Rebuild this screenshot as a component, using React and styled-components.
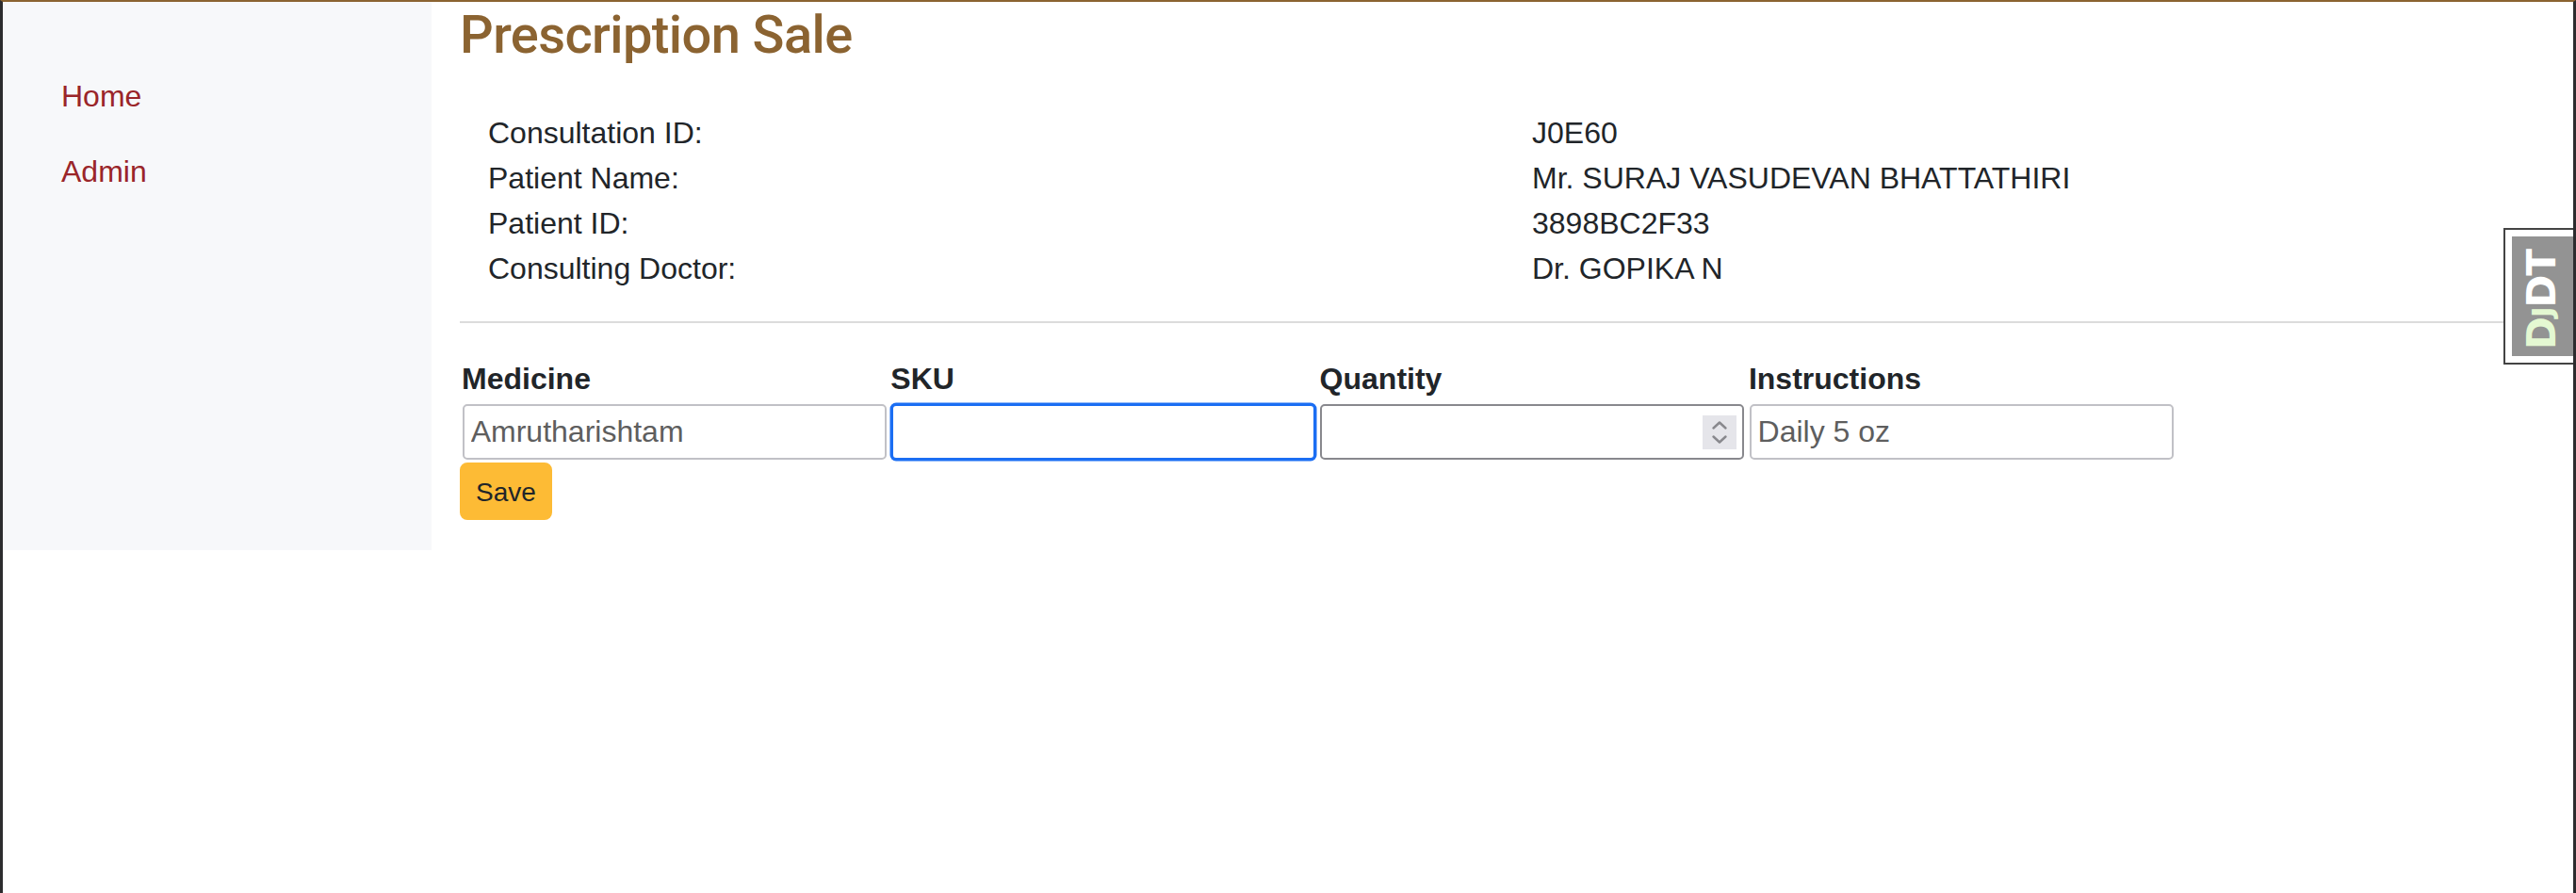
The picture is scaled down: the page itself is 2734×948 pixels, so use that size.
import React from "react";
import styled, { createGlobalStyle } from "styled-components";

const GlobalStyle = createGlobalStyle`
  *, *::before, *::after { box-sizing: border-box; }
  html, body { margin: 0; padding: 0; background: #fff; }
  body {
    font-family: "Liberation Sans", Arial, sans-serif;
    color: #212529;
    font-size: 32px;
    line-height: 1.5;
  }
`;

const Frame = styled.div`
  min-height: 100vh;
  border-top: 2px solid #8b6331;
  border-left: 3px solid #2c2c2e;
  border-right: 3px solid #2c2c2e;
`;

const Row = styled.div`
  display: flex;
  align-items: stretch;
`;

const Sidebar = styled.nav`
  flex: 0 0 455px;
  background: #f7f8fa;
  padding: 60px 0 0 30px;
`;

const NavList = styled.ul`
  list-style: none;
  margin: 0;
  padding: 0;
  display: flex;
  flex-direction: column;
`;

const NavLink = styled.a`
  display: block;
  padding: 16px 32px;
  color: #9a2529;
  text-decoration: none;
  font-size: 32px;
  line-height: 48px;
`;

const Main = styled.main`
  flex: 1;
  min-width: 0;
  padding: 0 31px 32px 30px;
`;

const Title = styled.h3`
  margin: 2px 0 0;
  font-family: Roboto, "Liberation Sans", sans-serif;
  font-weight: 500;
  font-size: 56px;
  line-height: 1.2;
  letter-spacing: -0.6px;
  color: #8b6331;
`;

const InfoGrid = styled.dl`
  margin: 46px 0 0;
  display: grid;
  grid-template-columns: 1108px 1fr;
  line-height: 48px;
`;

const InfoTerm = styled.dt`
  margin: 0;
  padding-left: 30px;
`;

const InfoValue = styled.dd`
  margin: 0;
  padding-left: 30px;
`;

const Divider = styled.hr`
  margin: 32px 0;
  border: 0;
  border-top: 2px solid #dcdcdc;
`;

const Form = styled.form`
  display: flex;
  flex-direction: column;
  align-items: flex-start;
  padding-top: 3px;
`;

const FieldGrid = styled.div`
  display: grid;
  grid-template-columns: repeat(4, 455.3px);
`;

const Field = styled.div`
  display: flex;
  flex-direction: column;
`;

const FieldLabel = styled.label`
  font-weight: 700;
  line-height: 48px;
  padding-left: 2px;
`;

const boxBase = `
  width: 450px;
  height: 59px;
  margin: 3px 2.5px 0 2.7px;
  border-radius: 5px;
  background: #fff;
  font-family: "Liberation Sans", Arial, sans-serif;
  font-size: 32px;
  color: #5e5e5e;
`;

const TextInput = styled.input`
  ${boxBase}
  padding: 0 7px;
  outline: none;
  border: 2px solid ${(p) => (p.$focused ? "#1b6ef3" : "#c1c1c6")};
  box-shadow: ${(p) => (p.$focused ? "0 0 0 1.5px #1b6ef3" : "none")};
`;

const NumberBox = styled.div`
  ${boxBase}
  display: flex;
  align-items: center;
  padding: 0 6px 0 7px;
  border: 2px solid #88888d;
`;

const BareInput = styled.input`
  flex: 1;
  min-width: 0;
  border: 0;
  outline: none;
  background: transparent;
  font: inherit;
  color: inherit;
  padding: 0;
`;

const Spinner = styled.span`
  flex: 0 0 36px;
  height: 36px;
  background: #e5e5ea;
  display: flex;
`;

const SaveButton = styled.button`
  margin-top: 3px;
  background: #fdbb35;
  border: 2px solid #fdbb35;
  border-radius: 8px;
  font-family: "Liberation Sans", Arial, sans-serif;
  font-size: 28px;
  line-height: 42px;
  padding: 9px 15px 6px;
  color: #212529;
  cursor: pointer;
`;

const DjdtHandle = styled.div`
  position: fixed;
  top: 242px;
  right: 3px;
  width: 74px;
  height: 145px;
  background: #fff;
  border: 2px solid #444;
  border-right: 0;
  padding: 7px 0 7px 7px;
`;

const DjdtButton = styled.div`
  height: 100%;
  background: #939393;
  display: flex;
  align-items: center;
  justify-content: center;
`;

const DjdtText = styled.span`
  writing-mode: vertical-rl;
  transform: rotate(180deg);
  font-family: "DejaVu Sans", "Liberation Sans", sans-serif;
  font-weight: 700;
  font-size: 42px;
  color: #fff;
  line-height: 1;
  letter-spacing: -1px;
  margin-right: 2px;
  margin-top: 6px;
`;

const DjLetter = styled.span`
  color: #e4f8d2;
  font-size: ${(p) => (p.$small ? "31px" : "42px")};
`;

const info = [
  ["Consultation ID:", "J0E60"],
  ["Patient Name:", "Mr. SURAJ VASUDEVAN BHATTATHIRI"],
  ["Patient ID:", "3898BC2F33"],
  ["Consulting Doctor:", "Dr. GOPIKA N"],
];

export default function App() {
  return (
    <>
      <GlobalStyle />
      <Frame>
        <Row>
          <Sidebar>
            <NavList>
              <li><NavLink href="#">Home</NavLink></li>
              <li><NavLink href="#">Admin</NavLink></li>
            </NavList>
          </Sidebar>
          <Main>
            <Title>Prescription Sale</Title>
            <InfoGrid>
              {info.map(([k, v]) => (
                <React.Fragment key={k}>
                  <InfoTerm>{k}</InfoTerm>
                  <InfoValue>{v}</InfoValue>
                </React.Fragment>
              ))}
            </InfoGrid>
            <Divider />
            <Form onSubmit={(e) => e.preventDefault()}>
              <FieldGrid>
                <Field>
                  <FieldLabel>Medicine</FieldLabel>
                  <TextInput defaultValue="Amrutharishtam" />
                </Field>
                <Field>
                  <FieldLabel>SKU</FieldLabel>
                  <TextInput $focused defaultValue="" />
                </Field>
                <Field>
                  <FieldLabel>Quantity</FieldLabel>
                  <NumberBox>
                    <BareInput defaultValue="" />
                    <Spinner>
                      <svg width="36" height="36" viewBox="0 0 36 36" fill="none">
                        <path d="M11.5 13.5 L18 7.5 L24.5 13.5" stroke="#88888d" strokeWidth="2.4" strokeLinecap="round" strokeLinejoin="round" />
                        <path d="M11.5 22.5 L18 28.5 L24.5 22.5" stroke="#88888d" strokeWidth="2.4" strokeLinecap="round" strokeLinejoin="round" />
                      </svg>
                    </Spinner>
                  </NumberBox>
                </Field>
                <Field>
                  <FieldLabel>Instructions</FieldLabel>
                  <TextInput defaultValue="Daily 5 oz" />
                </Field>
              </FieldGrid>
              <SaveButton type="submit">Save</SaveButton>
            </Form>
          </Main>
        </Row>
        <DjdtHandle>
          <DjdtButton>
            <DjdtText>
              <DjLetter>D</DjLetter>
              <DjLetter $small>J</DjLetter>DT
            </DjdtText>
          </DjdtButton>
        </DjdtHandle>
      </Frame>
    </>
  );
}
